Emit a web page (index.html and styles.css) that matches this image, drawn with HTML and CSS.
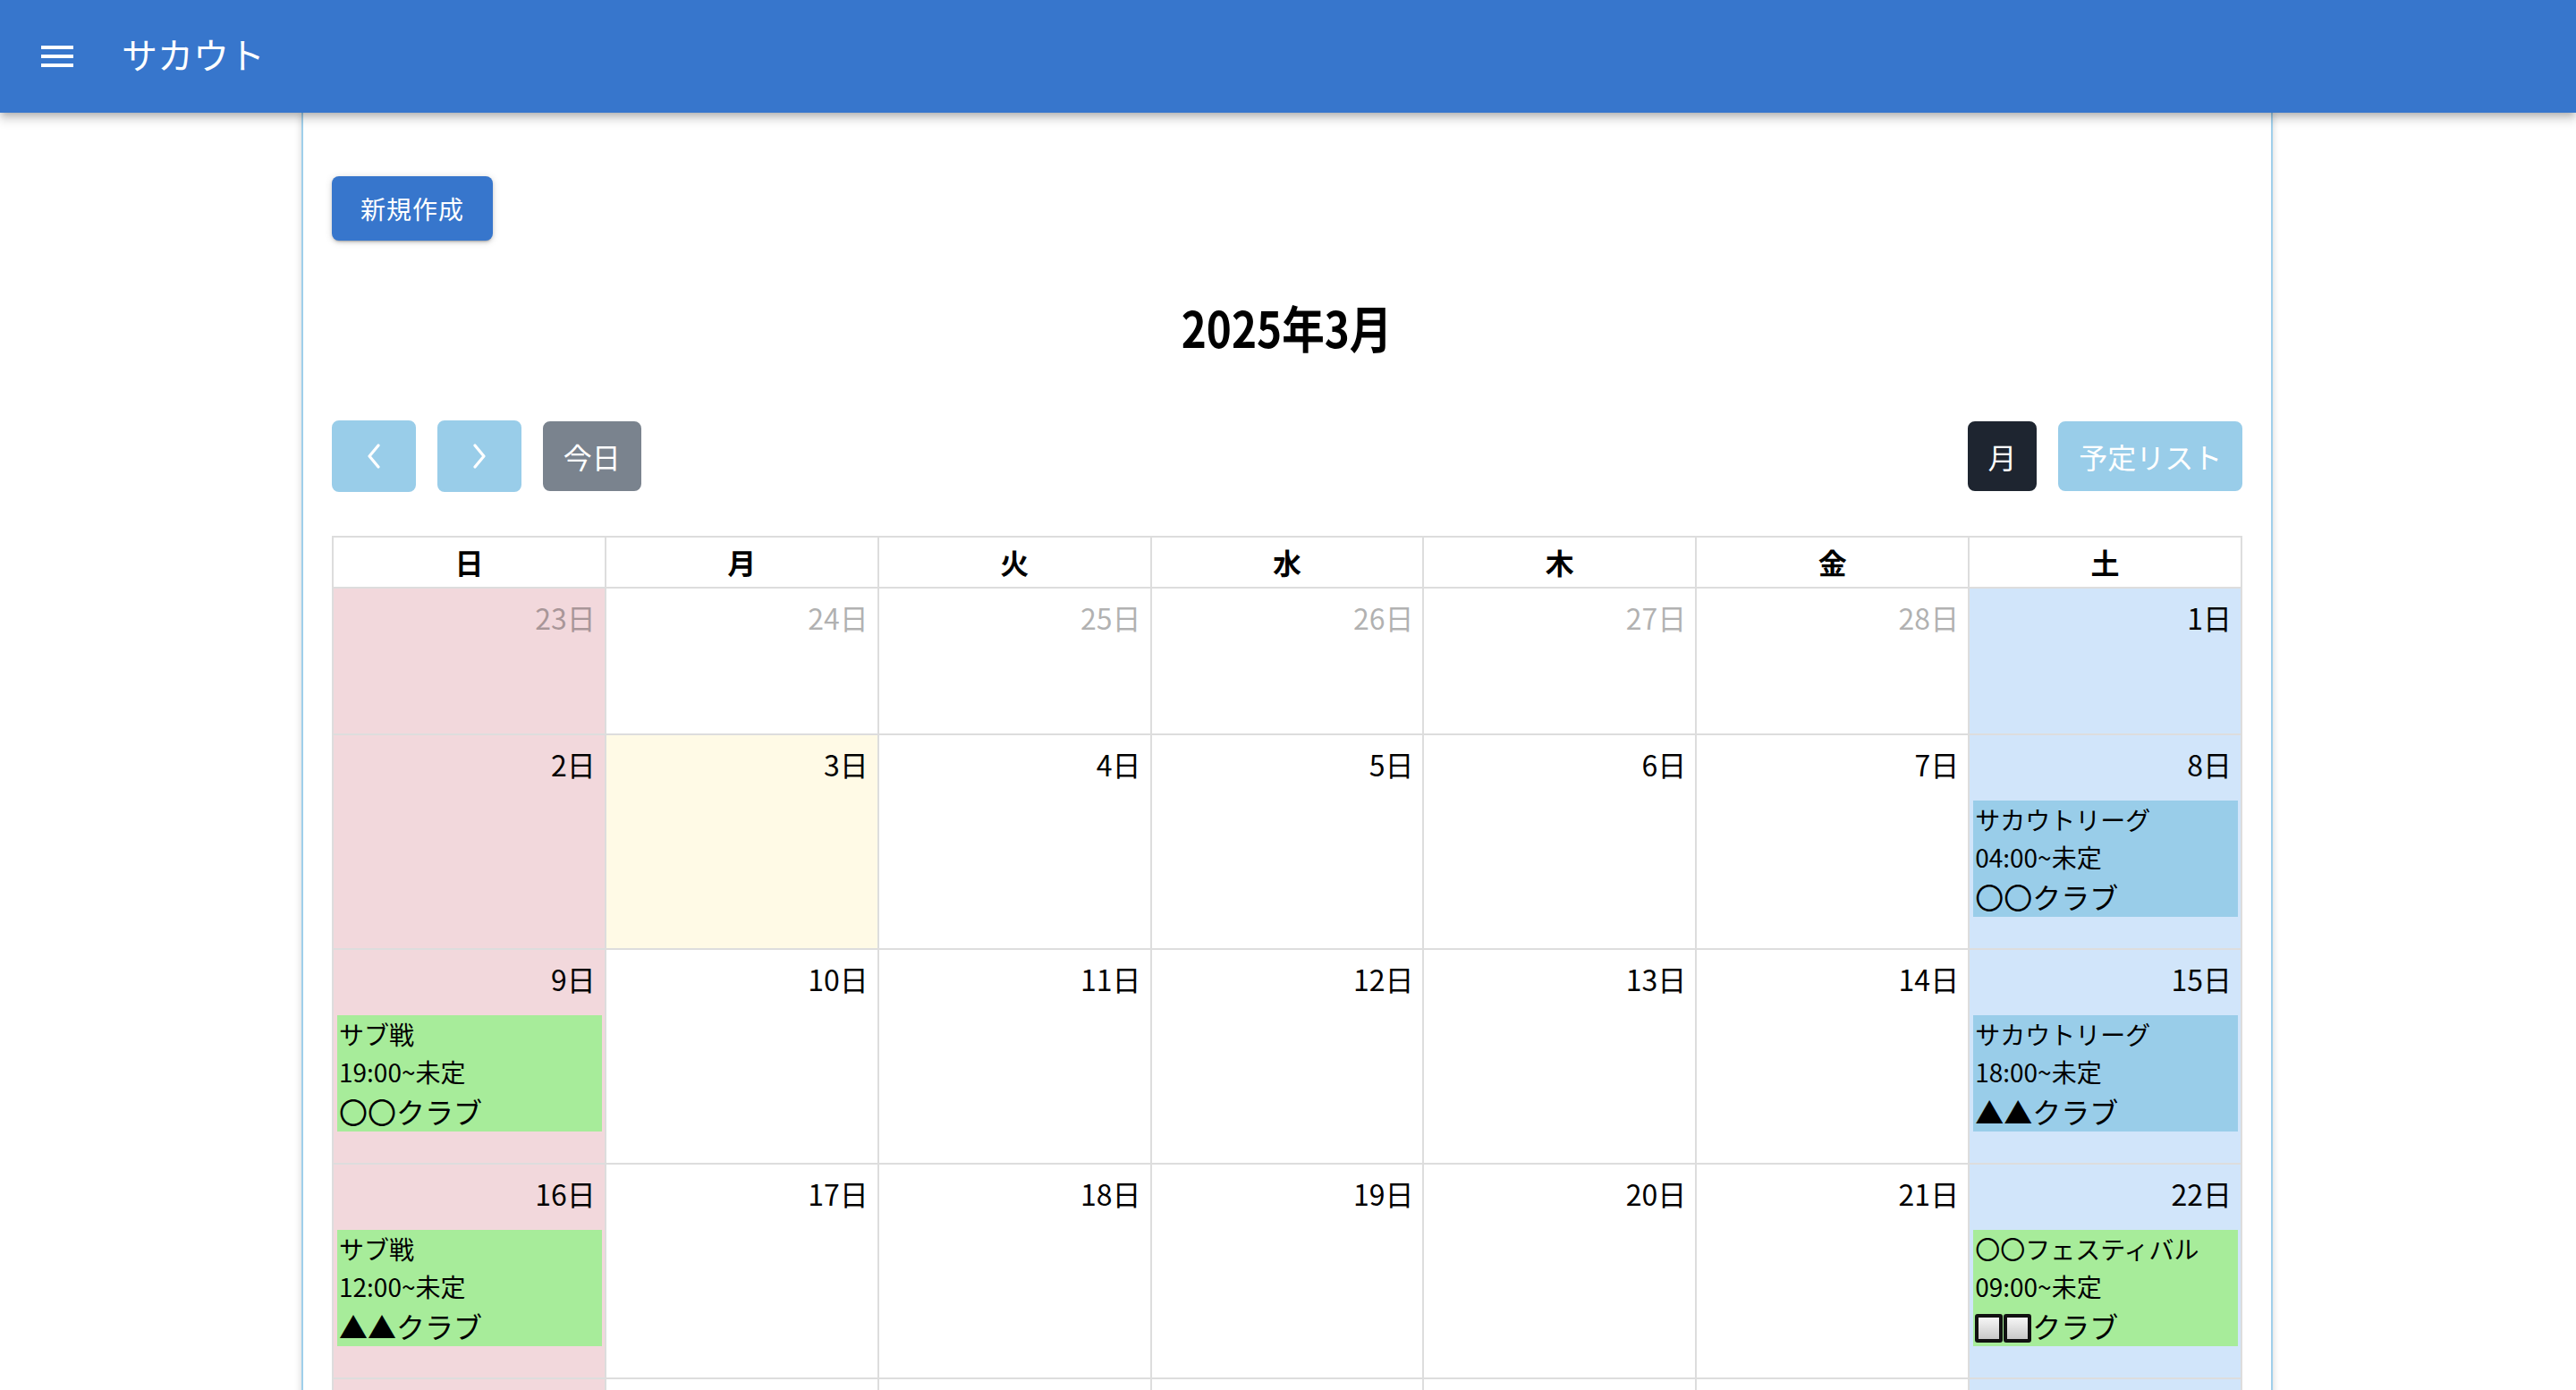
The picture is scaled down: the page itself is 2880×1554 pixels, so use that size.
FILE: index.html
```html
<!DOCTYPE html>
<html lang="ja">
<head>
<meta charset="utf-8">
<title>サカウト</title>
<link rel="stylesheet" href="styles.css">
</head>
<body>
<header class="appbar">
  <button class="nav-icon" aria-label="menu">
    <svg viewBox="0 0 24 24" width="48" height="48"><path d="M3,6H21V8H3V6M3,11H21V13H3V11M3,16H21V18H3V16Z" fill="#fff"/></svg>
  </button>
  <div class="appbar-title">サカウト</div>
</header>
<main class="sheet">
  <div class="actions"><button class="btn-new">新規作成</button></div>
  <h2 class="cal-title"><span>2025年3月</span></h2>
  <div class="toolbar">
    <div class="tb-group">
      <button class="fc-btn light icon" aria-label="prev">
        <svg viewBox="0 0 16 28" width="16" height="28"><polyline points="13,2 3,14 13,26" fill="none" stroke="#fff" stroke-width="3.2" stroke-linecap="round" stroke-linejoin="round"/></svg>
      </button>
      <button class="fc-btn light icon" aria-label="next">
        <svg viewBox="0 0 16 28" width="16" height="28"><polyline points="3,2 13,14 3,26" fill="none" stroke="#fff" stroke-width="3.2" stroke-linecap="round" stroke-linejoin="round"/></svg>
      </button>
      <button class="fc-btn today-btn">今日</button>
    </div>
    <div class="tb-group">
      <button class="fc-btn dark">月</button>
      <button class="fc-btn light">予定リスト</button>
    </div>
  </div>
  <div class="cal">
    <div class="dow">日</div><div class="dow">月</div><div class="dow">火</div><div class="dow">水</div><div class="dow">木</div><div class="dow">金</div><div class="dow">土</div>

    <div class="day sun other"><div class="num">23日</div></div>
    <div class="day other"><div class="num">24日</div></div>
    <div class="day other"><div class="num">25日</div></div>
    <div class="day other"><div class="num">26日</div></div>
    <div class="day other"><div class="num">27日</div></div>
    <div class="day other"><div class="num">28日</div></div>
    <div class="day sat"><div class="num">1日</div></div>

    <div class="day sun"><div class="num">2日</div></div>
    <div class="day today"><div class="num">3日</div></div>
    <div class="day"><div class="num">4日</div></div>
    <div class="day"><div class="num">5日</div></div>
    <div class="day"><div class="num">6日</div></div>
    <div class="day"><div class="num">7日</div></div>
    <div class="day sat"><div class="num">8日</div>
      <div class="events"><div class="ev blue"><div class="t">サカウトリーグ</div><div class="t">04:00~未定</div><div class="c">〇〇クラブ</div></div></div>
    </div>

    <div class="day sun"><div class="num">9日</div>
      <div class="events"><div class="ev green"><div class="t">サブ戦</div><div class="t">19:00~未定</div><div class="c">〇〇クラブ</div></div></div>
    </div>
    <div class="day"><div class="num">10日</div></div>
    <div class="day"><div class="num">11日</div></div>
    <div class="day"><div class="num">12日</div></div>
    <div class="day"><div class="num">13日</div></div>
    <div class="day"><div class="num">14日</div></div>
    <div class="day sat"><div class="num">15日</div>
      <div class="events"><div class="ev blue"><div class="t">サカウトリーグ</div><div class="t">18:00~未定</div><div class="c">▲▲クラブ</div></div></div>
    </div>

    <div class="day sun"><div class="num">16日</div>
      <div class="events"><div class="ev green"><div class="t">サブ戦</div><div class="t">12:00~未定</div><div class="c">▲▲クラブ</div></div></div>
    </div>
    <div class="day"><div class="num">17日</div></div>
    <div class="day"><div class="num">18日</div></div>
    <div class="day"><div class="num">19日</div></div>
    <div class="day"><div class="num">20日</div></div>
    <div class="day"><div class="num">21日</div></div>
    <div class="day sat"><div class="num">22日</div>
      <div class="events"><div class="ev green"><div class="t">〇〇フェスティバル</div><div class="t">09:00~未定</div><div class="c"><span class="sq" role="img" aria-label="□"></span><span class="sq" role="img" aria-label="□"></span>クラブ</div></div></div>
    </div>

    <div class="day sun"><div class="num">23日</div></div>
    <div class="day"><div class="num">24日</div></div>
    <div class="day"><div class="num">25日</div></div>
    <div class="day"><div class="num">26日</div></div>
    <div class="day"><div class="num">27日</div></div>
    <div class="day"><div class="num">28日</div></div>
    <div class="day sat"><div class="num">29日</div></div>

    <div class="day sun"><div class="num">30日</div></div>
    <div class="day"><div class="num">31日</div></div>
    <div class="day other"><div class="num">1日</div></div>
    <div class="day other"><div class="num">2日</div></div>
    <div class="day other"><div class="num">3日</div></div>
    <div class="day other"><div class="num">4日</div></div>
    <div class="day sat other"><div class="num">5日</div></div>
  </div>
</main>
</body>
</html>
```

FILE: styles.css
```css
html, body {
  margin: 0;
  padding: 0;
  background: #fff;
}
body {
  font-family: "Noto Sans CJK JP", "Noto Sans", sans-serif;
  color: #111;
}
button {
  font-family: "Noto Sans CJK JP", "Noto Sans", sans-serif;
  cursor: pointer;
}

.appbar {
  position: relative;
  z-index: 2;
  height: 126px;
  box-sizing: border-box;
  background: #3776cc;
  display: flex;
  align-items: center;
  padding-left: 40px;
  box-shadow: 0 4px 8px -2px rgba(0,0,0,.25), 0 8px 10px 1px rgba(0,0,0,.12);
}
.nav-icon {
  width: 48px;
  height: 48px;
  padding: 0;
  border: 0;
  background: none;
  display: flex;
}
.appbar-title {
  margin-left: 48px;
  padding-bottom: 6px;
  color: #fff;
  font-size: 40px;
  line-height: 1;
}

.sheet {
  position: relative;
  z-index: 1;
  width: 2204px;
  box-sizing: border-box;
  margin: 0 0 0 calc(50% - 1103px);
  min-height: calc(100vh - 126px);
  padding: 71px 32px 40px;
  border-left: 2px solid #9fcfeb;
  border-right: 2px solid #9fcfeb;
  box-shadow: 0 0 8px rgba(0,0,0,.18);
  background: #fff;
}

.actions {
  display: flex;
}
.btn-new {
  height: 72px;
  padding: 0 32px;
  border: 0;
  border-radius: 8px;
  background: #3776cc;
  color: #fff;
  font-size: 28px;
  line-height: 1;
  letter-spacing: 1px;
  box-shadow: 0 3px 2px -2px rgba(0,0,0,.2), 0 2px 4px 0 rgba(0,0,0,.14), 0 1px 10px 0 rgba(0,0,0,.12);
}

.cal-title {
  margin: 62px 0 0;
  text-align: center;
  font-size: 56px;
  line-height: 67px;
  font-weight: 700;
  color: #000;
}
.cal-title span {
  display: inline-block;
  transform: scaleX(.85);
}

.toolbar {
  margin-top: 72px;
  height: 80px;
  display: flex;
  justify-content: space-between;
  align-items: center;
}
.tb-group {
  display: flex;
  align-items: center;
  gap: 24px;
}
.fc-btn {
  box-sizing: border-box;
  font-size: 32px;
  line-height: 48px;
  padding: 12.8px 20.8px;
  border: 2px solid transparent;
  border-radius: 8px;
  color: #fff;
}
.fc-btn.icon {
  width: 94px;
  height: 80px;
  padding: 0;
  display: flex;
  align-items: center;
  justify-content: center;
}
.fc-btn.light {
  background: #99cde9;
  border-color: #99cde9;
}
.fc-btn.today-btn {
  background: #7a838e;
  border-color: #7a838e;
}
.fc-btn.dark {
  background: #1e2530;
  border-color: #1e2530;
}

.cal {
  margin-top: 49px;
  display: grid;
  grid-template-columns: repeat(7, 1fr);
  grid-template-rows: 57px 164px;
  grid-auto-rows: 240px;
  border-top: 2px solid #ddd;
  border-left: 2px solid #ddd;
}
.dow, .day {
  box-sizing: border-box;
  border-right: 2px solid #ddd;
  border-bottom: 2px solid #ddd;
  min-width: 0;
}
.dow {
  text-align: center;
  font-size: 32px;
  line-height: 48px;
  font-weight: 700;
  color: #000;
  padding-top: 3px;
}
.day {
  display: flex;
  flex-direction: column;
}
.day.sun { background: #f2d8dc; }
.day.sat { background: #d1e5fa; }
.day.today { background: #fffae6; }

.num {
  text-align: right;
  padding: 8px 10px 0 0;
  font-size: 32px;
  line-height: 48px;
  color: #000;
}
.day.other .num {
  opacity: .3;
}

.events {
  margin-top: 17px;
}
.ev {
  margin: 0 3px 0 4px;
  padding-left: 2px;
  color: #000;
  white-space: nowrap;
  overflow: hidden;
}
.ev.blue { background: #99cde9; }
.ev.green { background: #a7ec9a; }
.ev .t {
  font-size: 28px;
  line-height: 42px;
}
.ev .c {
  font-size: 32px;
  line-height: 46px;
}
.sq {
  display: inline-block;
  width: 31px;
  height: 32px;
  box-sizing: border-box;
  margin-right: 1px;
  border: 4px solid #111;
  border-radius: 3px;
  background: linear-gradient(#f6f6f6, #c8c8c8);
  vertical-align: -5px;
}
```
